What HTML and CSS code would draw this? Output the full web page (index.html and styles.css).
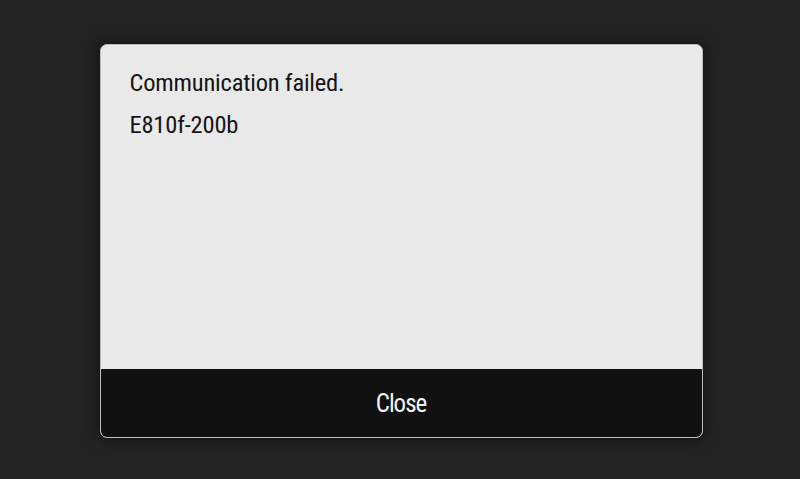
FILE: index.html
```html
<!DOCTYPE html>
<html lang="en">
<head>
  <meta charset="UTF-8" />
  <title>Error</title>
  <link rel="stylesheet" href="styles.css">
</head>
<body>
  <div class="screen">
    <div class="dialog">
      <div class="message">
        <p>Communication failed.</p>
        <p>E810f-200b</p>
      </div>
      <button class="close-btn">Close</button>
    </div>
  </div>
</body>
</html>
```

FILE: styles.css
```css
body {
  margin: 0;
  background: #232224;
  font-family: 'Roboto Condensed', 'Roboto', sans-serif;
}
.screen {
  height: 479px;
  padding-top: 44px;
  box-sizing: border-box;
  display: flex;
  justify-content: center;
}
.dialog {
  width: 603px;
  height: 394px;
  margin-left: 2px;
  background: #e9e9e9;
  border: 1px solid #bdbdbd;
  border-radius: 7px;
  box-sizing: border-box;
  overflow: hidden;
  display: flex;
  flex-direction: column;
  box-shadow: 0 0 14px rgba(0, 0, 0, 0.6);
}
.message {
  flex: 1;
  padding: 17px 29px;
  color: #141414;
  font-size: 24.5px;
  letter-spacing: -0.2px;
}
.message p {
  margin: 0;
  line-height: 42px;
}
.close-btn {
  height: 68px;
  border: none;
  background: #111111;
  color: #f2f2f2;
  font-family: inherit;
  font-size: 25px;
  letter-spacing: -1px;
  padding: 0;
}
```
